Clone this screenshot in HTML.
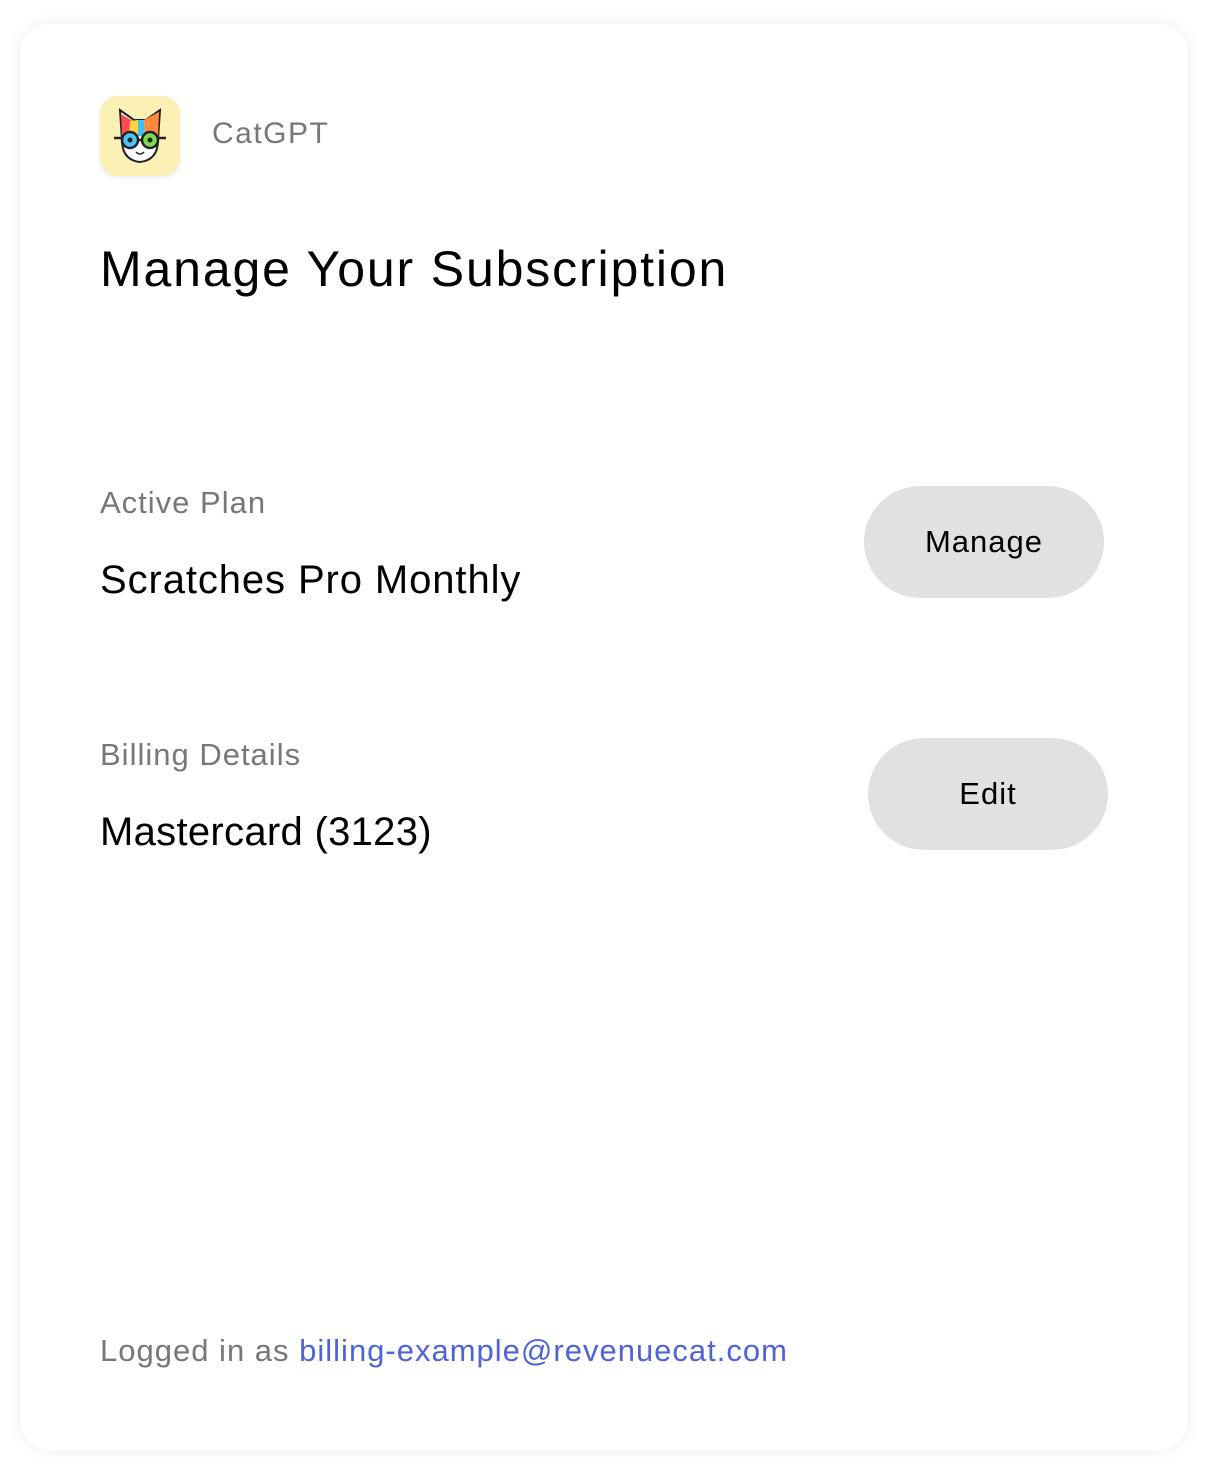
<!DOCTYPE html>
<html><head><style>
body{margin:0;width:1208px;height:1466px;background:#fff;font-family:"Liberation Sans",sans-serif;position:relative;overflow:hidden}
.card{position:absolute;left:20px;top:24px;width:1168px;height:1426px;border-radius:30px;background:#fff;box-shadow:0 0 16px rgba(0,0,0,0.08)}
.abs{position:absolute;white-space:nowrap}
.logo{left:100px;top:96px;width:80px;height:80px;border-radius:18px;background:#fdf0b4;box-shadow:0 2px 6px rgba(0,0,0,0.08)}
.lbl{color:#777;font-size:31px;letter-spacing:1px}
.val{color:#000;font-size:40px}
.btn{background:#e1e1e1;border-radius:56px;width:240px;height:112px;display:flex;align-items:center;justify-content:center;font-size:31px;color:#000;letter-spacing:1px}
</style></head><body>
<div class="card"></div>
<div class="abs logo">
<svg width="80" height="80" viewBox="0 0 80 80">
<path d="M22 44 L20 14 L34 24 L46 24 L60 14 L58 44 Q58 64 40 66 Q22 64 22 44Z" fill="#fff" stroke="#222" stroke-width="2"/>
<path d="M21 18 L33 25 L30 40 L22 40Z" fill="#ff4d4d"/>
<path d="M30 25 L38 24 L38 40 L29 40Z" fill="#ffd23f"/>
<path d="M38 24 L44 24 L45 40 L38 40Z" fill="#3ec1f0"/>
<path d="M44 24 L59 16 L58 40 L45 40Z" fill="#ff8a3d"/>
<circle cx="30" cy="44" r="8" fill="#4fc3f7" stroke="#222" stroke-width="2.5"/>
<circle cx="50" cy="44" r="8" fill="#7ed957" stroke="#222" stroke-width="2.5"/>
<circle cx="30" cy="44" r="2.5" fill="#222"/><circle cx="50" cy="44" r="2.5" fill="#222"/>
<path d="M38 44 H42 M14 42 H22 M58 42 H66" stroke="#222" stroke-width="2.5"/>
<path d="M36 56 Q40 60 44 56" stroke="#222" stroke-width="1.5" fill="none"/>
</svg></div>
<div class="abs" style="left:212px;top:117px;font-size:30px;color:#777;letter-spacing:1.5px">CatGPT</div>
<div class="abs" style="left:100px;top:240px;font-size:50px;color:#000;letter-spacing:1.85px">Manage Your Subscription</div>
<div class="abs lbl" style="left:100px;top:485px">Active Plan</div>
<div class="abs val" style="left:100px;top:558px;letter-spacing:0.9px">Scratches Pro Monthly</div>
<div class="abs btn" style="left:864px;top:486px">Manage</div>
<div class="abs lbl" style="left:100px;top:737px">Billing Details</div>
<div class="abs val" style="left:100px;top:810px;letter-spacing:0.3px">Mastercard (3123)</div>
<div class="abs btn" style="left:868px;top:738px">Edit</div>
<div class="abs" style="left:100px;top:1333px;font-size:31px;color:#777;letter-spacing:1px">Logged in as <span style="color:#4f63d8">billing-example@revenuecat.com</span></div>
</body></html>
